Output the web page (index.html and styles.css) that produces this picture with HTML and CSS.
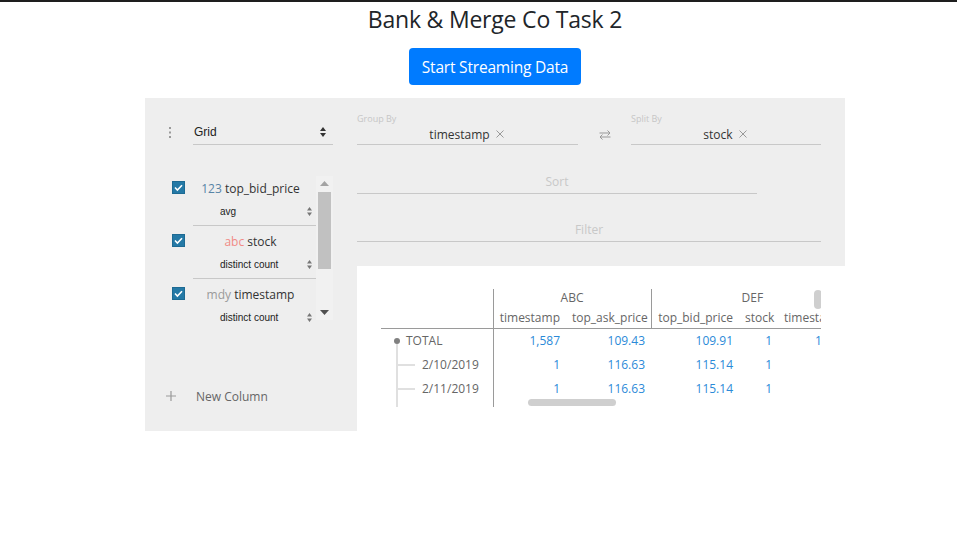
FILE: index.html
```html
<!DOCTYPE html>
<html>
<head>
<meta charset="utf-8">
<title>Bank &amp; Merge Co Task 2</title>
<link rel="stylesheet" href="styles.css">
</head>
<body>
<div class="topline"></div>
<div class="page">
  <h1 class="title">Bank &amp; Merge Co Task 2</h1>
  <div class="btnrow"><button class="btn">Start Streaming Data</button></div>
  <div class="viewer">
    <aside class="side">
      <div class="plugin-row">
        <span class="dots">
          <svg width="4" height="11" viewBox="0 0 4 11"><rect x="1" y="0" width="2" height="2" fill="#9a9a9a"/><rect x="1" y="4.5" width="2" height="2" fill="#9a9a9a"/><rect x="1" y="9" width="2" height="2" fill="#9a9a9a"/></svg>
        </span>
        <div class="plugin-select">
          <span>Grid</span>
          <svg class="updown" width="6" height="10" viewBox="0 0 6 10"><path d="M0 4 L3 0 L6 4Z M0 6 L3 10 L6 6Z" fill="#333"/></svg>
        </div>
      </div>
      <div class="collist">
        <div class="items">
          <div class="item">
            <div class="cb"><svg width="13" height="13" viewBox="0 0 13 13"><rect x="0.5" y="0.5" width="12" height="12" fill="#2479a6" stroke="#1d6a93"/><path d="M3 6.5 L5.4 9 L10 4.2" fill="none" stroke="#fff" stroke-width="1.6"/></svg></div>
            <div class="col-body">
              <div class="col-name"><span class="t-num">123</span> top_bid_price</div>
              <div class="agg"><span>avg</span><svg width="5" height="9" viewBox="0 0 5 9"><path d="M0 3.5 L2.5 0 L5 3.5Z M0 5.5 L2.5 9 L5 5.5Z" fill="#777"/></svg></div>
            </div>
          </div>
          <div class="item">
            <div class="cb"><svg width="13" height="13" viewBox="0 0 13 13"><rect x="0.5" y="0.5" width="12" height="12" fill="#2479a6" stroke="#1d6a93"/><path d="M3 6.5 L5.4 9 L10 4.2" fill="none" stroke="#fff" stroke-width="1.6"/></svg></div>
            <div class="col-body">
              <div class="col-name"><span class="t-str">abc</span> stock</div>
              <div class="agg"><span>distinct count</span><svg width="5" height="9" viewBox="0 0 5 9"><path d="M0 3.5 L2.5 0 L5 3.5Z M0 5.5 L2.5 9 L5 5.5Z" fill="#777"/></svg></div>
            </div>
          </div>
          <div class="item">
            <div class="cb"><svg width="13" height="13" viewBox="0 0 13 13"><rect x="0.5" y="0.5" width="12" height="12" fill="#2479a6" stroke="#1d6a93"/><path d="M3 6.5 L5.4 9 L10 4.2" fill="none" stroke="#fff" stroke-width="1.6"/></svg></div>
            <div class="col-body">
              <div class="col-name"><span class="t-date">mdy</span> timestamp</div>
              <div class="agg"><span>distinct count</span><svg width="5" height="9" viewBox="0 0 5 9"><path d="M0 3.5 L2.5 0 L5 3.5Z M0 5.5 L2.5 9 L5 5.5Z" fill="#777"/></svg></div>
            </div>
          </div>
        </div>
        <div class="vscroll">
          <svg class="arr" width="9" height="5" viewBox="0 0 9 5"><path d="M0 5 L4.5 0 L9 5Z" fill="#a3a3a3"/></svg>
          <div class="vthumb"></div>
          <div class="vspace"></div>
          <svg class="arr" width="9" height="5" viewBox="0 0 9 5"><path d="M0 0 L4.5 5 L9 0Z" fill="#505050"/></svg>
        </div>
      </div>
      <div class="newcol">
        <svg width="10" height="10" viewBox="0 0 10 10"><path d="M5 0 V10 M0 5 H10" stroke="#999" stroke-width="1.2"/></svg>
        <span>New Column</span>
      </div>
    </aside>
    <section class="config">
      <div class="pivots">
        <div class="pivot group">
          <div class="plabel">Group By</div>
          <div class="pfield"><span class="pill">timestamp<svg width="8" height="8" viewBox="0 0 8 8"><path d="M0.5 0.5 L7.5 7.5 M7.5 0.5 L0.5 7.5" stroke="#999" stroke-width="1"/></svg></span></div>
        </div>
        <div class="swap">
          <svg width="12" height="10" viewBox="0 0 12 10"><path d="M0.5 3 H11 M8.5 0.5 L11 3 L8.5 5.5 M11.5 7 H1 M3.5 4.5 L1 7 L3.5 9.5" fill="none" stroke="#999" stroke-width="1"/></svg>
        </div>
        <div class="pivot split">
          <div class="plabel">Split By</div>
          <div class="pfield"><span class="pill">stock<svg width="8" height="8" viewBox="0 0 8 8"><path d="M0.5 0.5 L7.5 7.5 M7.5 0.5 L0.5 7.5" stroke="#999" stroke-width="1"/></svg></span></div>
        </div>
      </div>
      <div class="bar sort">Sort</div>
      <div class="bar filter">Filter</div>
    </section>
    <section class="gridarea">
      <div class="viewport">
        <table class="grid">
          <colgroup>
            <col class="w-rh"><col class="w-c1"><col class="w-c2"><col class="w-c3"><col class="w-c4"><col class="w-c5">
          </colgroup>
          <tr class="h1">
            <th class="rh"></th>
            <th class="grp abc" colspan="2">ABC</th>
            <th class="grp def" colspan="3">DEF</th>
          </tr>
          <tr class="h2">
            <th class="rh"></th>
            <th>timestamp</th>
            <th class="gend">top_ask_price</th>
            <th>top_bid_price</th>
            <th>stock</th>
            <th class="c5">timestamp</th>
          </tr>
          <tr>
            <td class="rh total"><span class="node"></span>TOTAL</td>
            <td>1,587</td><td>109.43</td><td>109.91</td><td>1</td><td>1,587</td>
          </tr>
          <tr>
            <td class="rh child"><span class="stub"></span>2/10/2019</td>
            <td>1</td><td>116.63</td><td>115.14</td><td>1</td><td></td>
          </tr>
          <tr>
            <td class="rh child"><span class="stub"></span>2/11/2019</td>
            <td>1</td><td>116.63</td><td>115.14</td><td>1</td><td></td>
          </tr>
          <tr class="tail">
            <td class="rh"><span class="trunk"></span></td>
            <td></td><td></td><td></td><td></td><td></td>
          </tr>
        </table>
        <div class="hthumb"></div>
        <div class="vthumb2"></div>
      </div>
    </section>
  </div>
</div>
</body>
</html>
```

FILE: styles.css
```css
html, body {
  margin: 0;
  padding: 0;
  background: #fff;
  overflow: hidden;
}
body {
  font-family: "Open Sans", "Noto Sans", sans-serif;
  color: #212529;
}
.topline {
  height: 2px;
  background: #1e1e1e;
}
.page {
  width: 990px;
}
.title {
  margin: 3px 0 0;
  font-weight: 400;
  font-size: 23px;
  line-height: 29px;
  text-align: center;
  color: #212529;
  letter-spacing: -0.2px;
}
.btnrow {
  margin-top: 14px;
  display: flex;
  justify-content: center;
}
.btn {
  width: 172px;
  height: 37px;
  border: none;
  border-radius: 4px;
  background: #007bff;
  color: #fff;
  font-family: "Open Sans", sans-serif;
  font-size: 15.5px;
  letter-spacing: -0.2px;
  padding: 0;
}
.viewer {
  margin: 13px 0 0 145px;
  width: 700px;
  display: grid;
  grid-template-columns: 212px 488px;
  grid-template-rows: 168px 165px;
}
/* sidebar */
.side {
  grid-row: 1 / 3;
  grid-column: 1;
  background: #eeeeee;
  padding: 22px 0 0 20px;
  display: flex;
  flex-direction: column;
}
.plugin-row {
  display: flex;
  align-items: center;
  height: 25px;
}
.dots {
  width: 10px;
  display: flex;
  justify-content: center;
  margin-right: 18px;
}
.dots svg { display: block; }
.plugin-select {
  width: 140px;
  height: 25px;
  box-sizing: border-box;
  border-bottom: 1px solid #c8c8c8;
  display: flex;
  align-items: center;
  justify-content: space-between;
  font-family: "Liberation Sans", Arial, sans-serif;
  font-size: 12px;
  color: #222;
  padding: 0 7px 0 1px;
}
.collist {
  margin-top: 28px;
  height: 151px;
  display: flex;
  overflow: hidden;
}
.items {
  width: 151px;
}
.item {
  display: flex;
}
.cb {
  width: 28px;
  padding-top: 8px;
  padding-left: 7px;
  box-sizing: border-box;
}
.cb svg { display: block; }
.col-body {
  width: 123px;
  border-bottom: 1px solid #c8c8c8;
  padding: 8px 0 6px;
}
.col-name {
  height: 16px;
  line-height: 16px;
  font-size: 12px;
  color: #333;
  text-align: center;
  padding-right: 8px;
  white-space: nowrap;
}
.t-num { color: #5784a6; }
.t-str { color: #f18a86; }
.t-date { color: #9a9a9a; }
.agg {
  margin-top: 6px;
  height: 16px;
  display: flex;
  align-items: center;
  justify-content: space-between;
  padding: 0 4px 0 27px;
  font-family: "Liberation Sans", Arial, sans-serif;
  font-size: 10px;
  color: #222;
}
.vscroll {
  margin-top: 3px;
  width: 17px;
  height: 144px;
  background: #f1f1f1;
  display: flex;
  flex-direction: column;
  align-items: center;
}
.vscroll .arr {
  display: block;
  margin: 5px 0;
}
.vthumb {
  margin-top: 1px;
  width: 13px;
  height: 77px;
  background: #c1c1c1;
}
.vspace { flex: 1; }
.newcol {
  margin-top: 64px;
  display: flex;
  align-items: center;
  height: 16px;
  font-size: 12px;
  color: #666;
  padding-left: 1px;
}
.newcol svg {
  display: block;
  margin-right: 20px;
}
/* config */
.config {
  grid-row: 1;
  grid-column: 2;
  background: #eeeeee;
  padding-top: 15px;
}
.pivots {
  display: flex;
  align-items: flex-end;
}
.pivot.group { width: 221px; }
.pivot.split { width: 190px; }
.plabel {
  font-size: 9px;
  line-height: 11px;
  color: #c6c6c6;
}
.pfield {
  height: 21px;
  box-sizing: border-box;
  border-bottom: 1px solid #c8c8c8;
  display: flex;
  align-items: center;
  justify-content: center;
  font-size: 12px;
  color: #333;
}
.pill {
  display: flex;
  align-items: center;
  margin-left: -2px;
}
.pill svg {
  margin-left: 6px;
}
.swap {
  width: 53px;
  height: 21px;
  display: flex;
  align-items: center;
  justify-content: center;
}
.swap svg { display: block; }
.bar {
  height: 24px;
  box-sizing: border-box;
  border-bottom: 1px solid #c8c8c8;
  font-size: 12px;
  line-height: 23px;
  color: #c8c8c8;
  text-align: center;
}
.bar.sort { width: 400px; margin-top: 25px; }
.bar.filter { width: 464px; margin-top: 24px; }
/* grid */
.gridarea {
  grid-row: 2;
  grid-column: 2;
  background: #fff;
  padding: 23px 0 0 24px;
}
.viewport {
  position: relative;
  width: 440px;
  height: 118px;
  overflow: hidden;
}
.grid {
  border-collapse: collapse;
  font-size: 12px;
  white-space: nowrap;
  table-layout: fixed;
  width: 487px;
}
.w-rh { width: 112px; }
.w-c1 { width: 73px; }
.w-c2 { width: 85px; }
.w-c3 { width: 88px; }
.w-c4 { width: 39px; }
.w-c5 { width: 90px; }
.grid th, .grid td {
  padding: 0 6px;
  text-align: right;
  font-weight: 400;
  overflow: hidden;
}
.grid th { color: #666; }
.grid td { color: #2b8ad8; }
.grid .rh {
  border-right: 1px solid #9a9a9a;
  text-align: left;
  color: #666;
  padding: 0;
  position: relative;
  overflow: visible;
}
.grid tr.h1 th { height: 18px; line-height: 18px; }
.grid tr.h2 th { height: 21px; line-height: 20px; vertical-align: middle; border-bottom: 1px solid #9a9a9a; }
.grid th.grp.abc { text-align: center; border-right: 1px solid #9a9a9a; }
.grid th.grp.def { text-align: left; padding-left: 90px; }
.grid th.gend { border-right: 1px solid #9a9a9a; }
.grid th.c5 { text-align: left; }
.grid tr td { height: 24px; line-height: 22px; }
.grid tr td:last-child { text-align: left; padding-left: 37px; }
.grid tr.tail td { height: 10px; }
.grid td.total { padding-left: 25px; }
.grid td.child { padding-left: 41px; }
.node {
  position: absolute;
  left: 13px;
  top: 9px;
  width: 6px;
  height: 6px;
  border-radius: 50%;
  background: #808080;
}
.grid td.total::after {
  content: "";
  position: absolute;
  left: 15px;
  top: 15px;
  bottom: 0;
  border-left: 2px solid #e0e0e0;
}
.grid td.child::before {
  content: "";
  position: absolute;
  left: 15px;
  top: 0;
  bottom: 0;
  border-left: 2px solid #e0e0e0;
}
.stub {
  position: absolute;
  left: 17px;
  top: 11px;
  width: 17px;
  border-top: 2px solid #e0e0e0;
}
.trunk {
  position: absolute;
  left: 15px;
  top: 0;
  bottom: 0;
  border-left: 2px solid #e0e0e0;
}
.hthumb {
  position: absolute;
  left: 147px;
  top: 110px;
  width: 88px;
  height: 7px;
  border-radius: 4px;
  background: #cfcfcf;
}
.vthumb2 {
  position: absolute;
  left: 433px;
  top: 1px;
  width: 8px;
  height: 19px;
  border-radius: 4px;
  background: #cfcfcf;
}
```
